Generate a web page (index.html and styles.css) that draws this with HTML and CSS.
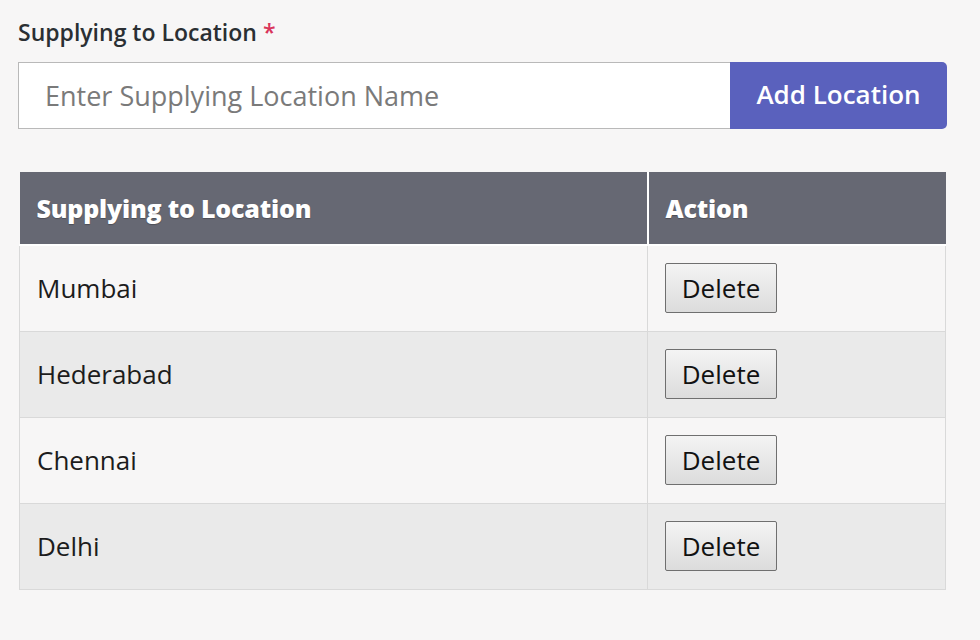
FILE: index.html
```html
<!DOCTYPE html>
<html>
<head>
<meta charset="utf-8">
<link rel="stylesheet" href="styles.css">
</head>
<body>
<div class="page">
  <label class="field-label">Supplying to Location <span class="req">*</span></label>
  <div class="input-group">
    <input class="loc-input" type="text" placeholder="Enter Supplying Location Name">
    <button class="add-btn">Add Location</button>
  </div>
  <table class="loc-table">
    <thead>
      <tr><th class="col-name">Supplying to Location</th><th class="col-action">Action</th></tr>
    </thead>
    <tbody>
      <tr><td>Mumbai</td><td><button class="del-btn">Delete</button></td></tr>
      <tr><td>Hederabad</td><td><button class="del-btn">Delete</button></td></tr>
      <tr><td>Chennai</td><td><button class="del-btn">Delete</button></td></tr>
      <tr><td>Delhi</td><td><button class="del-btn">Delete</button></td></tr>
    </tbody>
  </table>
</div>
</body>
</html>
```
FILE: styles.css
```css
html, body {
  margin: 0;
  background: #f7f6f6;
}
body {
  font-family: "Open Sans", "Noto Sans", sans-serif;
  color: #1c1c1c;
}
.page {
  width: 929px;
  padding: 17px 0 0 18px;
}
.field-label {
  display: block;
  font-size: 23px;
  font-weight: 600;
  color: #2a2f33;
  line-height: 31px;
  letter-spacing: 0;
}
.req {
  color: #d9345a;
}
.input-group {
  display: flex;
  margin-top: 14px;
  height: 67px;
}
.loc-input {
  flex: 1;
  box-sizing: border-box;
  height: 67px;
  border: 1px solid #b9b9b9;
  border-right: none;
  background: #ffffff;
  padding: 0 0 0 26px;
  font-family: inherit;
  font-size: 27px;
  color: #333;
  outline: none;
}
.loc-input::placeholder {
  color: #7a7a7a;
}
.add-btn {
  width: 217px;
  height: 67px;
  box-sizing: border-box;
  border: none;
  border-radius: 0 5px 5px 0;
  background: #5a61bd;
  color: #fff;
  font-family: inherit;
  font-size: 26px;
  font-weight: 600;
  padding: 0 0 4px 0;
}
.loc-table {
  margin-top: 43px;
  margin-left: 1px;
  width: 927px;
  border-collapse: collapse;
  table-layout: fixed;
}
.loc-table th {
  background: #666873;
  color: #fff;
  text-align: left;
  font-size: 25px;
  font-weight: 800;
  height: 72px;
  padding: 0 17px;
  border-bottom: 2px solid #ffffff;
  letter-spacing: -0.2px;
  text-shadow: 0 1px 1px rgba(0,0,0,0.25);
}
.loc-table th.col-name {
  width: 593px;
  border-right: 2px solid #ffffff;
}
.loc-table td {
  height: 86px;
  padding: 0 17px;
  font-size: 26px;
  border: 1px solid #d9d9d9;
  box-sizing: border-box;
}
.loc-table tbody tr:nth-child(odd) td {
  background: #f7f6f6;
}
.loc-table tbody tr:nth-child(even) td {
  background: #eaeaea;
}
.del-btn {
  width: 112px;
  height: 50px;
  border: 1px solid #6f6f6f;
  border-radius: 2px;
  background: linear-gradient(#f4f4f4, #dcdcdc);
  font-family: inherit;
  font-size: 26px;
  color: #111;
  padding: 0;
}
```
